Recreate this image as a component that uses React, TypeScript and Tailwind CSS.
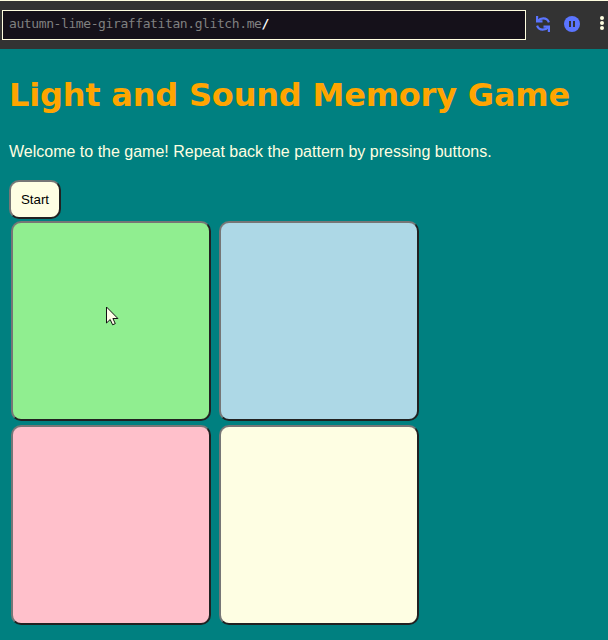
import React from "react";

const tiles = [
  { id: 1, color: "bg-[#90ee90]" },
  { id: 2, color: "bg-[#add8e6]" },
  { id: 3, color: "bg-[#ffc0cb]" },
  { id: 4, color: "bg-[#fefee3]" },
];

const bevel =
  "border-2 border-t-[#767676] border-l-[#767676] border-r-[#212121] border-b-[#212121]";

function Toolbar() {
  return (
    <header className="flex h-[49px] items-start border-t border-[#fffee0] bg-[#333333] pl-[2px]">
      <div className="mt-[9px] flex h-[30px] w-[524px] items-center border border-[#fffee0] bg-[#15111a] pb-[3px] pl-[6px] font-['DejaVu_Sans_Mono',monospace] text-[13px] tracking-[-0.4px] whitespace-pre text-[#808080]">
        autumn-lime-giraffatitan.glitch.me<span className="font-bold text-white">/</span>
      </div>
      <svg className="mt-[15px] ml-[10px] h-4 w-[14px] shrink-0" viewBox="0 0 14 16" fill="none" stroke="#5b75ff" strokeWidth="2.2">
        <path d="M1.100 0v5.400h5.400" />
        <path d="M2 4.800C3.400 3 5 2.300 7.300 2.300c2.700 0 4.700 1.400 5.600 4" />
        <path d="M12.900 16v-5.400H7.500" />
        <path d="M12 11.200c-1.400 1.800-3 2.500-5.300 2.500-2.700 0-4.700-1.400-5.600-4" />
      </svg>
      <svg className="mt-[15px] ml-[14px] size-4 shrink-0" viewBox="0 0 16 16">
        <circle cx="8" cy="8" r="8" fill="#5b75ff" />
        <path d="M5 5h2v6H5zM9 5h2v6H9z" fill="#333333" />
      </svg>
      <div className="mt-[15px] ml-5 flex shrink-0 flex-col gap-[1px]">
        <i className="size-1 rounded-full bg-[#fffee0]" />
        <i className="size-1 rounded-full bg-[#fffee0]" />
        <i className="size-1 rounded-full bg-[#fffee0]" />
      </div>
    </header>
  );
}

export default function App() {
  return (
    <div className="relative h-[640px] w-[608px] overflow-hidden bg-[#008080] font-['Liberation_Sans',Arial,sans-serif]">
      <Toolbar />
      <main className="pl-[9px]">
        <h1 className="pt-[27px] font-['DejaVu_Sans',Verdana,sans-serif] text-[32px] leading-[39px] font-bold tracking-[-0.19px] whitespace-nowrap text-[#ffa500]">
          Light and Sound Memory Game
        </h1>
        <p className="pt-[28px] text-[16px] leading-[18px] whitespace-nowrap text-[#fffee0]">
          Welcome to the game! Repeat back the pattern by pressing buttons.
        </p>
        <button className={`mt-[19px] block h-[39px] w-[52px] rounded-[10px] bg-[#fefee3] text-[13.333px] text-black ${bevel}`}>
          Start
        </button>
        <div className="mt-[2px] ml-[2px] grid w-[408px] grid-cols-2 gap-x-2 gap-y-1">
          {tiles.map((tile) => (
            <button
              key={tile.id}
              className={`size-[200px] rounded-[10px] ${tile.color} ${bevel}`}
            />
          ))}
        </div>
      </main>
      <svg className="absolute top-[306px] left-[106px] h-[20px] w-[13px]" viewBox="0 0 13 20">
        <path
          d="M.5 1v16l3.700-3.500 2.400 5.300 2.700-1.200-2.400-5.100h5z"
          fill="#fffee8"
          stroke="#111111"
        />
      </svg>
    </div>
  );
}
